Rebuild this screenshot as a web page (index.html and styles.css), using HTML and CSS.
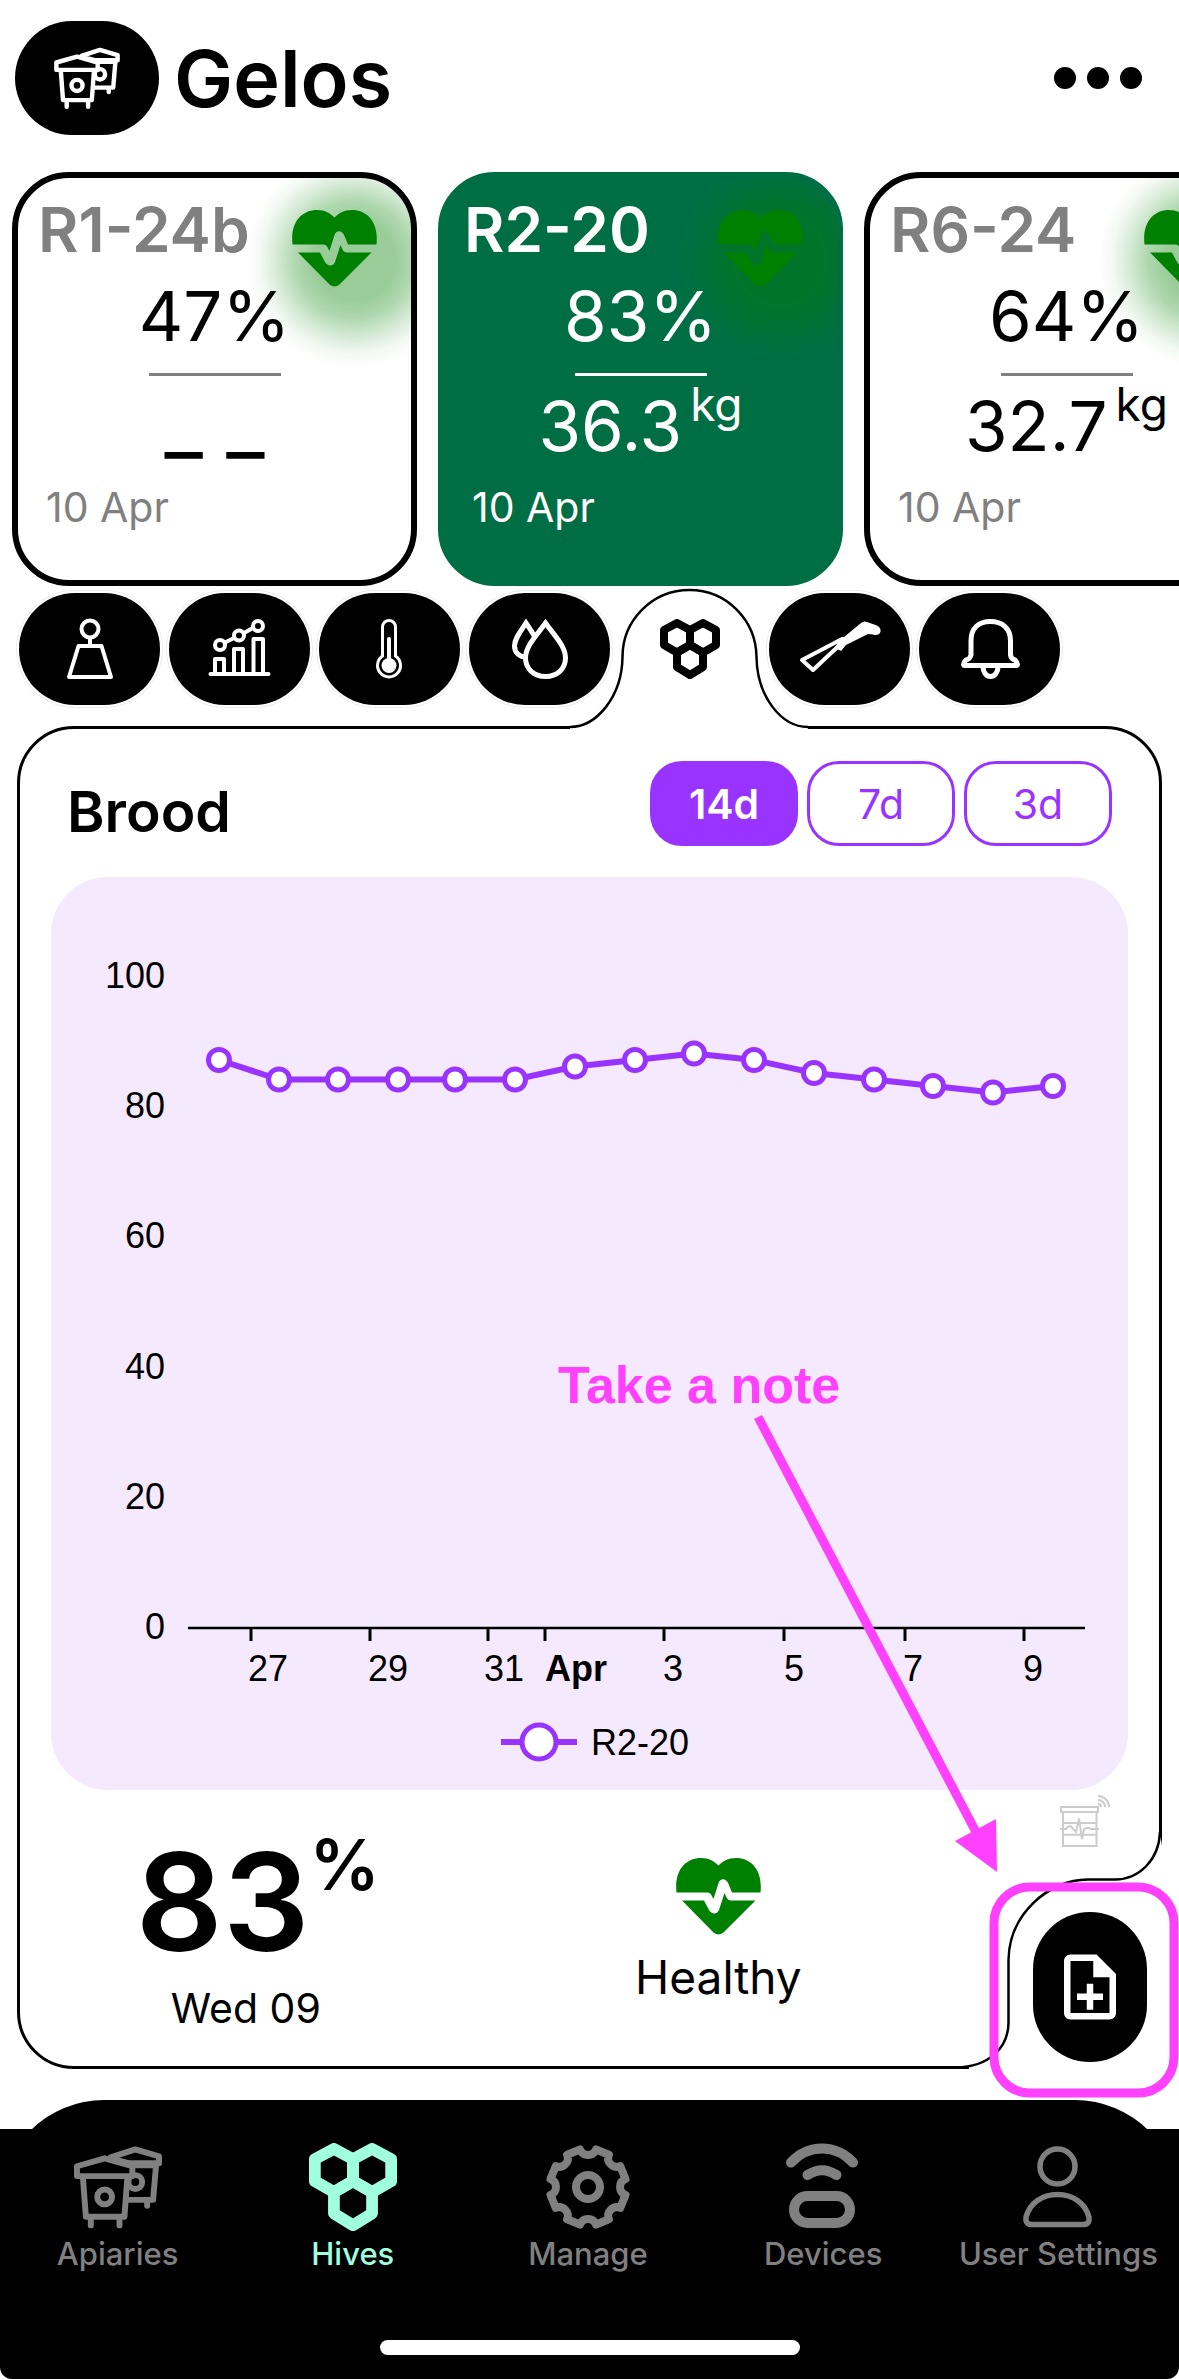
FILE: index.html
```html
<!DOCTYPE html>
<html lang="en">
<head>
<meta charset="utf-8">
<meta name="viewport" content="width=device-width, initial-scale=1">
<title>Gelos – Hives</title>
<link rel="stylesheet" href="styles.css">
</head>
<body>
<svg class="sprite" aria-hidden="true">
  <symbol id="apiaries" viewBox="0 0 89 84">
    <g fill="#000" stroke="currentColor" stroke-width="6" stroke-linecap="round" stroke-linejoin="round">
      <path d="M57 20L83 20L80 55H54M74 56V61"/>
      <circle cx="62" cy="37" r="7"/>
      <path d="M37 12L62 4L86 11V18H56L37 13Z"/>
      <path d="M9 32L12 72H51L54 32M17 74V81M46 74V81"/>
      <path d="M3 31V21L31 13L59 21V31Z"/>
      <circle cx="31" cy="52" r="7.5"/>
    </g>
  </symbol>
  <symbol id="hives" viewBox="0 0 60 60">
    <g fill="none" stroke="currentColor" stroke-width="8" stroke-linejoin="round">
      <path d="M17 4L30 11V26L17 33.500L4 26V11Z"/>
      <path d="M43 4L56 11V26L43 33.500L30 26V11Z"/>
      <path d="M30 26L43 33.500V48L30 56L17 48V33.500Z"/>
    </g>
  </symbol>
  <symbol id="heart" viewBox="0 0 85 77">
    <path fill="currentColor" d="M.5 34.400C-2 12 10 0 25 0C33 0 38.500 3.500 42.500 7.500C46.500 3.500 52 0 60 0C75 0 87 12 84.500 34.400H56L52.500 26C50 20 44.500 20 42.500 25L37.500 41L35 36.500Q34 34.400 31.500 34.400Z"/>
    <path fill="currentColor" d="M6 42.500H28L33 52C35.500 56.500 41.500 56.500 43 52L48.500 35L50.500 39.500Q52 42.500 55 42.500H79.500L47.500 74.500Q42.500 78.500 37.500 74.500Z"/>
  </symbol>
</svg>

<header class="topbar">
  <button class="apiary-button" type="button" aria-label="Apiaries"><svg class="apiary-icon"><use href="#apiaries"/></svg></button>
  <h1 class="apiary-name">Gelos</h1>
  <button class="more" type="button" aria-label="More options">
    <svg width="90" height="24" viewBox="0 0 90 24"><circle cx="12" cy="12" r="11"/><circle cx="45" cy="12" r="11"/><circle cx="78" cy="12" r="11"/></svg>
  </button>
</header>

<main>
  <section class="cards" aria-label="Hives">
    <article class="card">
      <svg class="card-heart"><use href="#heart"/></svg>
      <h2 class="card-name">R1-24b</h2>
      <p class="card-value">47%</p>
      <hr class="card-rule">
      <p class="card-value card-value-empty">_ _</p>
      <p class="card-date">10 Apr</p>
    </article>
    <article class="card card-selected">
      <svg class="card-heart"><use href="#heart"/></svg>
      <h2 class="card-name">R2-20</h2>
      <p class="card-value">83%</p>
      <hr class="card-rule">
      <p class="card-value">36.3<sup class="unit">kg</sup></p>
      <p class="card-date">10 Apr</p>
    </article>
    <article class="card">
      <svg class="card-heart"><use href="#heart"/></svg>
      <h2 class="card-name">R6-24</h2>
      <p class="card-value">64%</p>
      <hr class="card-rule">
      <p class="card-value">32.7<sup class="unit">kg</sup></p>
      <p class="card-date">10 Apr</p>
    </article>
  </section>

  <div class="tabs">
    <button class="tab" type="button" aria-label="Weight">
      <svg class="tab-icon" viewBox="0 0 90 64"><g fill="none" stroke="currentColor" stroke-width="4"><circle cx="45" cy="12" r="8.500"/><path d="M45 21V29M33.500 29H56.500L66 60H24Z" stroke-linejoin="round"/></g></svg>
    </button>
    <button class="tab" type="button" aria-label="Statistics">
      <svg class="tab-icon" viewBox="0 0 90 64"><g fill="none" stroke="currentColor" stroke-width="4"><path d="M15.500 57H73.500" stroke-linecap="round"/><path d="M20 57V42H29V57M39 57V32H48V57M58.500 57V22H68V57M30 25.500L39 21M49 16L58 11" stroke-linejoin="round"/><circle cx="25" cy="28" r="5"/><circle cx="44" cy="18.500" r="5"/><circle cx="63" cy="9" r="5"/></g></svg>
    </button>
    <button class="tab" type="button" aria-label="Temperature">
      <svg class="tab-icon" viewBox="0 0 90 64"><path d="M37.500 10A6.500 6.500 0 0 1 50.500 10V39A11.500 11.500 0 1 1 37.500 39Z" fill="none" stroke="currentColor" stroke-width="3"/><path d="M44 22V46" stroke="currentColor" stroke-width="4" stroke-linecap="round"/><circle cx="44" cy="48.500" r="7.500" fill="currentColor"/></svg>
    </button>
    <button class="tab" type="button" aria-label="Humidity">
      <svg class="tab-icon" viewBox="0 0 90 64"><g fill="#000" stroke="currentColor" stroke-width="5"><path d="M31 6C25 15 19.500 22 19.500 29C19.500 36 25 40 31 40C37 40 42 36 42 29C42 22 37 15 31 6Z"/><path d="M50.500 6C42 18 30.500 29 30.500 41C30.500 52 39 59.500 50.500 59.500C62 59.500 70.500 52 70.500 41C70.500 29 59 18 50.500 6Z"/></g></svg>
    </button>
    <button class="tab tab-active" type="button" aria-label="Brood" aria-pressed="true">
      <svg class="tab-outline" viewBox="0 0 238 142"><path d="M0 139C27 139 52 108 52.500 69C52.500 32 82.500 2 119.500 2C156.500 2 186 32 186.500 69C187 108 211 139 238 139V142H0Z" fill="#fff"/><path d="M0 139C27 139 52 108 52.500 69C52.500 32 82.500 2 119.500 2C156.500 2 186 32 186.500 69C187 108 211 139 238 139" fill="none" stroke="#000" stroke-width="2.500"/></svg>
      <svg class="tab-cells"><use href="#hives"/></svg>
    </button>
    <button class="tab" type="button" aria-label="Inspections">
      <svg class="tab-icon" viewBox="0 0 90 64"><path d="M7 43L47 22L51 22L18 53Z" fill="none" stroke="currentColor" stroke-width="4" stroke-linejoin="round"/><path d="M43 25L66 6Q69 3.500 72 5L82 8.500Q87 11 85 16Q83 19 78 17.500L73 17L51 28L46 34L40 31Z" fill="currentColor"/></svg>
    </button>
    <button class="tab" type="button" aria-label="Alerts">
      <svg class="tab-icon" viewBox="0 0 90 64"><g fill="none" stroke="currentColor" stroke-width="5" stroke-linejoin="round"><path d="M26 24C26 11 34 4.500 45.500 4.500C57 4.500 65.500 11 65.500 24V38Q66 42 70 43Q75 48.500 70 48.500H21Q16 48.500 21 43Q25 42 26 38Z"/><path d="M38 49C38 63 53 63 53 49"/></g></svg>
    </button>
  </div>

  <section class="panel">
    <div class="panel-head">
      <h2 class="panel-title">Brood</h2>
      <div class="ranges">
        <button class="range range-active" type="button" aria-pressed="true">14d</button>
        <button class="range" type="button">7d</button>
        <button class="range" type="button">3d</button>
      </div>
    </div>

    <div class="chart">
      <svg class="chart-plot" viewBox="0 0 1077 913" role="img" aria-label="Brood of R2-20 over 14 days">
        <g class="axis-y">
          <text x="114" y="111">100</text><text x="114" y="241">80</text><text x="114" y="371">60</text>
          <text x="114" y="502">40</text><text x="114" y="632">20</text><text x="114" y="762">0</text>
        </g>
        <path d="M137 751H1034" stroke="#000" stroke-width="2.500"/>
        <path d="M200 751V764M319 751V764M437 751V764M494 751V764M613 751V764M733 751V764M854 751V764M973 751V764" stroke="#000" stroke-width="3"/>
        <g class="axis-x">
          <text x="217" y="804">27</text><text x="337" y="804">29</text><text x="453" y="804">31</text><text class="month" x="525" y="804">Apr</text>
          <text x="622" y="804">3</text><text x="743" y="804">5</text><text x="862" y="804">7</text><text x="982" y="804">9</text>
        </g>
        <polyline class="line" points="168,183 228,202.500 287,202.500 347,202.500 404,202.500 464,202.500 524,189.500 584,183 643,176.500 703,183 763,196 823,202.500 882,209 942,215.500 1002,209"/>
        <g class="dots">
          <circle cx="168" cy="183" r="10.500"/><circle cx="228" cy="202.500" r="10.500"/><circle cx="287" cy="202.500" r="10.500"/><circle cx="347" cy="202.500" r="10.500"/><circle cx="404" cy="202.500" r="10.500"/><circle cx="464" cy="202.500" r="10.500"/><circle cx="524" cy="189.500" r="10.500"/><circle cx="584" cy="183" r="10.500"/><circle cx="643" cy="176.500" r="10.500"/><circle cx="703" cy="183" r="10.500"/><circle cx="763" cy="196" r="10.500"/><circle cx="823" cy="202.500" r="10.500"/><circle cx="882" cy="209" r="10.500"/><circle cx="942" cy="215.500" r="10.500"/><circle cx="1002" cy="209" r="10.500"/>
        </g>
        <path class="line" d="M450 865H526"/>
        <circle class="legend-dot" cx="488" cy="865" r="17"/>
        <text class="legend-text" x="540" y="878">R2-20</text>
      </svg>
    </div>

    <div class="summary">
      <div class="reading">
        <p class="reading-value">83<sup class="percent">%</sup></p>
        <p class="reading-date">Wed 09</p>
      </div>
      <div class="health">
        <svg class="health-heart"><use href="#heart"/></svg>
        <p class="health-label">Healthy</p>
      </div>
      <div class="sensor">
        <svg width="52" height="54" viewBox="20 14 52 54"><g fill="none" stroke="#ccc" stroke-width="2"><path d="M22 27H59V32H22ZM24 32V66H57.500V32M24 43H57.500M24 54.700H57.500M21 49H27Q31 43 34 49L37 52L40 38.500L43 59L45 49Q49 47 52 49H60M59 24A3 3 0 0 1 62 27M59 20A7 7 0 0 1 66 27M59 16A11 11 0 0 1 70 27"/></g></svg>
      </div>
    </div>

    <svg class="notch" viewBox="0 0 209 239"><path d="M207 2C206 30 186 49.500 162 49.500H135C95 49.500 56 85 55.500 130V193C55 218 36 237 3 237.500L16 237V239H209V16Z" fill="#fff"/><path d="M207 2C206 30 186 49.500 162 49.500H135C95 49.500 56 85 55.500 130V193C55 218 36 237 3 237.500" fill="none" stroke="#000" stroke-width="2.500"/></svg>
    <button class="add-note" type="button" aria-label="Take a note">
      <svg width="78" height="78" viewBox="0 0 24 24"><path fill="currentColor" d="M13 11h-2v3H8v2h3v3h2v-3h3v-2h-3zm1-9H6c-1.100 0-2 .9-2 2v16c0 1.100.89 2 1.990 2H18c1.100 0 2-.9 2-2V8zm4 18H6V4h7v5h5z"/></svg>
    </button>
    <svg class="callout" width="640" height="740" viewBox="-20 0 640 740">
      <text class="callout-text" x="-1" y="43">Take a note</text>
      <path d="M199 57L417 472" stroke="#ff40ff" stroke-width="9"/>
      <path d="M438 512L396 481L437 459Z" fill="#ff40ff"/>
      <rect x="435" y="527" width="180" height="206" rx="36" fill="none" stroke="#ff40ff" stroke-width="9"/>
    </svg>
  </section>
</main>

<nav class="bottom-nav">
  <div class="nav-list">
    <a class="nav-item" href="#apiaries-page"><svg class="nav-icon" viewBox="0 0 89 88"><use href="#apiaries" y="2" width="89" height="84"/></svg>Apiaries</a>
    <a class="nav-item nav-current" href="#hives-page" aria-current="page"><svg class="nav-icon"><use href="#hives"/></svg>Hives</a>
    <a class="nav-item" href="#manage-page"><svg class="nav-icon" viewBox="-44 -44 88 88"><g fill="none" stroke="currentColor" stroke-width="8" stroke-linejoin="round"><path d="M-8-37.500A8.600 8.600 0 0 0 8-37.500L20.900-32.200A8.600 8.600 0 0 0 32.200-20.900L37.500-8A8.600 8.600 0 0 0 37.500 8L32.200 20.900A8.600 8.600 0 0 0 20.900 32.200L8 37.500A8.600 8.600 0 0 0-8 37.500L-20.900 32.200A8.600 8.600 0 0 0-32.200 20.900L-37.500 8A8.600 8.600 0 0 0-37.500-8L-32.200-20.900A8.600 8.600 0 0 0-20.900-32.200Z"/><circle r="12"/></g></svg>Manage</a>
    <a class="nav-item" href="#devices-page"><svg class="nav-icon" viewBox="0 0 88 88"><g fill="none" stroke="currentColor" stroke-width="10" stroke-linecap="round"><path d="M12 19.500Q25 5.500 43 5.500T74 19.500M28.500 32Q43 22.500 57.500 32"/><rect x="15" y="53" width="56" height="27" rx="13.500"/></g></svg>Devices</a>
    <a class="nav-item" href="#settings-page"><svg class="nav-icon" viewBox="0 0 88 88"><g fill="none" stroke="currentColor" stroke-width="5.500" stroke-linejoin="round"><circle cx="43.500" cy="23.500" r="17.500"/><path d="M12 74C16 60 28 51.500 43.500 51.500C59 51.500 71 60 75 74Q76 81 70 81.500H17Q11 81 12 74Z"/></g></svg>User Settings</a>
  </div>
  <div class="home-indicator"></div>
</nav>
</body>
</html>
```

FILE: styles.css
```css
* {
  box-sizing: border-box;
}

body {
  margin: 0;
  background: #fff;
  color: #000;
  font-family: Inter, "Liberation Sans", sans-serif;
  display: flex;
  flex-direction: column;
  min-height: 100vh;
  overflow-x: hidden;
}

h1,
h2,
p {
  margin: 0;
}

button {
  border: 0;
  padding: 0;
  font-family: inherit;
  cursor: pointer;
}

svg {
  display: block;
}

.sprite {
  position: absolute;
  width: 0;
  height: 0;
}

/* Header */
.topbar {
  display: flex;
  align-items: center;
  gap: 15px;
  padding: 21px 36px 37px 15px;
}

.apiary-button {
  display: flex;
  align-items: center;
  justify-content: center;
  width: 144px;
  height: 114px;
  border-radius: 57px;
  background: #000;
  color: #fff;
}

.apiary-icon {
  width: 66px;
  height: 62px;
}

.apiary-name {
  flex: 1;
  font-size: 79px;
  line-height: 96px;
  font-weight: 600;
}

.more {
  background: none;
}

/* Hive cards */
.cards {
  display: flex;
  gap: 21px;
  padding: 0 12px;
  overflow: hidden;
}

.card {
  position: relative;
  flex: 0 0 405px;
  min-height: 414px;
  padding: 16px 20px 0;
  border: 6px solid #000;
  border-radius: 57px;
  background: radial-gradient(circle at 336px 82px, #00800066 40px, #00800050 58px, #00800028 78px, #0080000c 94px, #00800000 108px) #fff;
}

.card-selected {
  border-color: #006e45;
  background-color: #006e45;
  color: #fff;
}

.card-heart {
  position: absolute;
  top: 32px;
  right: 34px;
  width: 85px;
  height: 77px;
  color: #008000;
}

.card-name {
  color: #808080;
  font-size: 62px;
  line-height: 72px;
  font-weight: 600;
}

.card-value {
  margin-top: 10px;
  font-size: 69px;
  line-height: 80px;
  text-align: center;
}

.card-value-empty {
  margin-bottom: 25px;
  font-size: 84px;
  line-height: 72px;
}

.card-rule {
  width: 132px;
  height: 3px;
  margin: 17px auto 0;
  border: 0;
  background: #808080;
}

.card-date {
  margin-top: 17px;
  padding-left: 8px;
  color: #808080;
  font-size: 41px;
  line-height: 48px;
}

.card-selected .card-name,
.card-selected .card-date {
  color: #fff;
}

.card-selected .card-rule {
  background: #fff;
}

.unit {
  margin-left: 8px;
  font-size: 46px;
  line-height: 0;
  vertical-align: 30px;
}

/* Metric tabs */
.tabs {
  display: flex;
  gap: 9px;
  padding: 7px 19px 21px;
}

.tab {
  display: flex;
  align-items: center;
  justify-content: center;
  width: 141px;
  height: 112px;
  border-radius: 56px;
  background: #000;
  box-shadow: 0 0 0 2px #fff, 0 0 0 3px #ededed;
  color: #fff;
}

.tab-icon {
  width: 90px;
  height: 64px;
}

.tab-active {
  position: relative;
  z-index: 1;
  background: none;
  box-shadow: none;
  color: #000;
}

.tab-outline {
  position: absolute;
  top: -5px;
  left: -49px;
  width: 238px;
  height: 142px;
}

.tab-cells {
  position: relative;
  width: 60px;
  height: 60px;
}

/* Detail panel */
.panel {
  position: relative;
  margin: 0 17px 31px;
  border: 3px solid #000;
  border-radius: 57px;
}

.panel-head {
  display: flex;
  align-items: flex-end;
  justify-content: space-between;
  padding: 32px 47px 31px 47px;
}

.panel-title {
  font-size: 57px;
  line-height: 68px;
  font-weight: 600;
}

.ranges {
  display: flex;
  gap: 9px;
}

.range {
  width: 148px;
  height: 85px;
  border: 3px solid #9933ff;
  border-radius: 32px;
  background: #fff;
  color: #9933ff;
  font-size: 41px;
  line-height: 48px;
}

.range-active {
  background: #9933ff;
  color: #fff;
  font-weight: 600;
}

.chart {
  margin: 0 31px;
  border-radius: 57px;
  background: #f5e9fe;
}

.chart-plot {
  width: 100%;
  height: auto;
  font-family: "Liberation Sans", sans-serif;
  font-size: 36px;
}

.axis-y {
  text-anchor: end;
}

.axis-x {
  text-anchor: middle;
}

.month {
  font-weight: 700;
}

.line {
  fill: none;
  stroke: #9933ff;
  stroke-width: 6px;
}

.dots,
.legend-dot {
  fill: #fff;
  stroke: #9933ff;
  stroke-width: 5px;
}

.summary {
  display: grid;
  grid-template-columns: 452fr 494fr 194fr;
  min-height: 276px;
}

.reading {
  padding-top: 42px;
  text-align: center;
}

.reading-value {
  padding-left: 24px;
  font-size: 136px;
  line-height: 140px;
  font-weight: 600;
}

.percent {
  font-size: 70px;
  line-height: 0;
  vertical-align: 61px;
}

.reading-date {
  margin-top: 12px;
  font-size: 41px;
  line-height: 48px;
}

.health {
  display: flex;
  flex-direction: column;
  align-items: center;
  gap: 14px;
  padding-top: 68px;
}

.health-heart {
  width: 85px;
  height: 77px;
  color: #008000;
}

.health-label {
  font-size: 46px;
  line-height: 56px;
}

.sensor {
  display: flex;
  justify-content: flex-end;
  padding: 4px 48px 0 0;
}

.notch {
  position: absolute;
  right: -3px;
  bottom: -3px;
  width: 209px;
  height: 239px;
}

.add-note {
  position: absolute;
  right: 12px;
  bottom: 4px;
  display: flex;
  align-items: center;
  justify-content: center;
  width: 114px;
  height: 150px;
  border-radius: 57px;
  background: #000;
  color: #fff;
}

.callout {
  position: absolute;
  right: -20px;
  bottom: -34px;
  overflow: visible;
  pointer-events: none;
}

.callout-text {
  fill: #ff40ff;
  font-family: "Liberation Sans", sans-serif;
  font-size: 52px;
  font-weight: 700;
}

/* Bottom navigation */
.bottom-nav {
  flex: 1;
  padding-bottom: 24px;
  border-radius: 0 0 12px 12px;
  background: linear-gradient(transparent 29px, #000 29px);
}

.nav-list {
  display: grid;
  grid-template-columns: repeat(5, 1fr);
  padding: 43px 3px 68px 0;
  border-radius: 104px 104px 0 0;
  background: #000;
}

.nav-item {
  display: flex;
  flex-direction: column;
  align-items: center;
  gap: 5px;
  min-width: 0;
  color: #808080;
  font-size: 31px;
  line-height: 36px;
  font-weight: 500;
  text-decoration: none;
  white-space: nowrap;
}

.nav-current {
  color: #9fffdf;
}

.nav-icon {
  width: 88px;
  height: 88px;
}

.home-indicator {
  width: 420px;
  height: 15px;
  margin: 0 auto;
  border-radius: 8px;
  background: #fff;
}
```
